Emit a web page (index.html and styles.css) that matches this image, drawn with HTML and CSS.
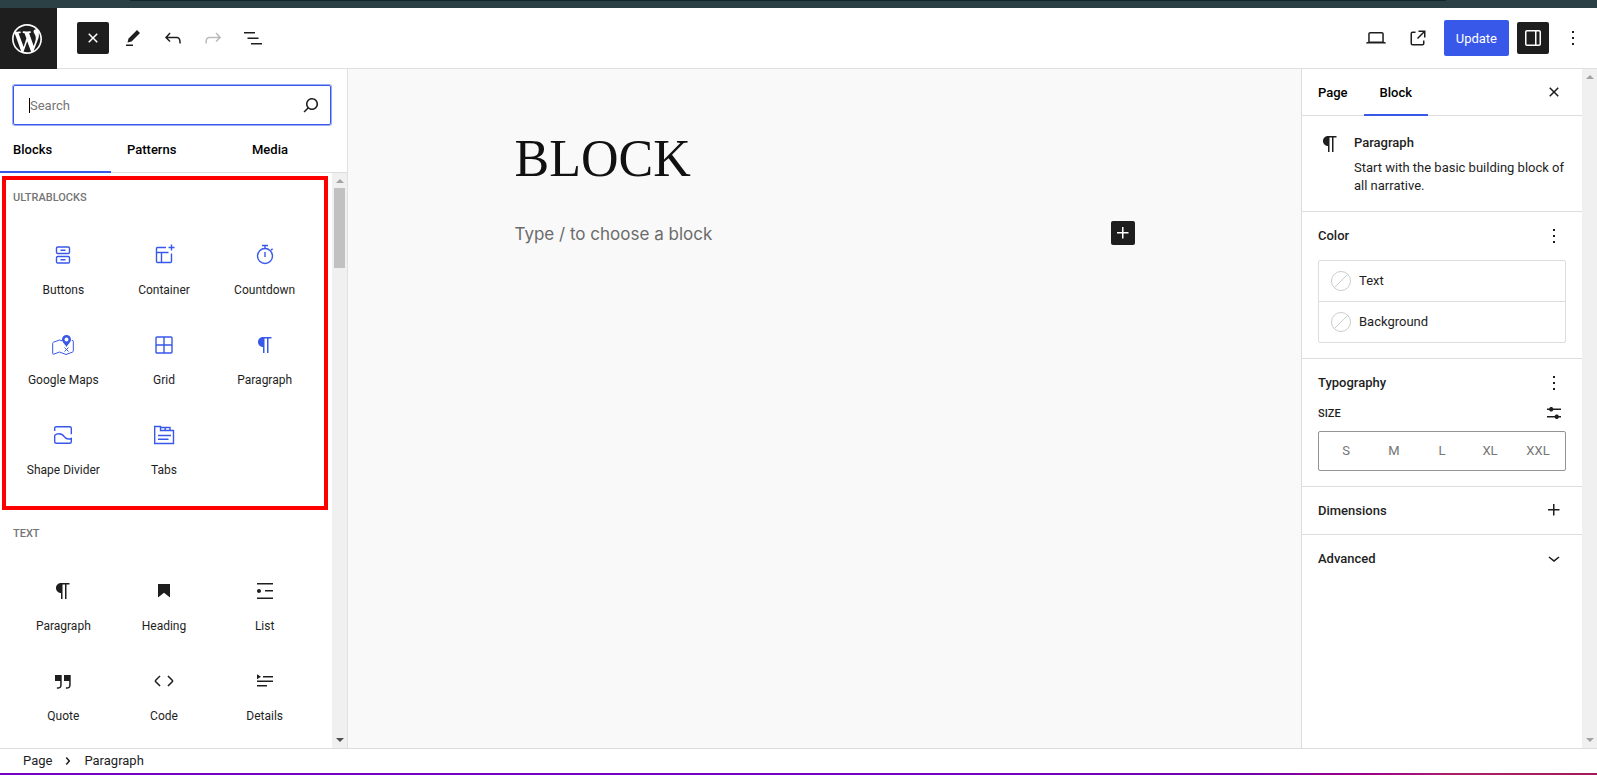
FILE: index.html
```html
<!DOCTYPE html>
<html lang="en">
<head>
<meta charset="utf-8">
<title>Edit Page</title>
<link rel="stylesheet" href="styles.css">
</head>
<body>
<svg class="sprite" aria-hidden="true">
  <symbol id="i-close" viewBox="0 0 24 24"><path d="M12 13.06l3.712 3.713 1.061-1.06L13.061 12l3.712-3.712-1.06-1.06L12 10.938 8.288 7.227l-1.061 1.06L10.939 12l-3.712 3.712 1.06 1.061L12 13.061z"/></symbol>
  <symbol id="i-more" viewBox="0 0 24 24"><path d="M13 19h-2v-2h2v2zm0-6h-2v-2h2v2zm0-6h-2V5h2v2z"/></symbol>
  <symbol id="i-plus" viewBox="0 0 24 24"><path d="M11 12.5V17.5H12.5V12.5H17.5V11H12.5V6H11V11H6V12.5H11Z"/></symbol>
  <symbol id="i-paragraph" viewBox="0 0 24 24"><path d="m9.996 14v-.2251l.004.0001v6.225h1.5v-14.5h2.5v14.5h1.5v-14.5h3v-1.5h-8.504c-2.761 0-5 2.239-5 5 0 2.761 2.239 5 5 5z"/></symbol>
</svg>

<div class="browser-strip"><span class="browser-strip-line"></span></div>

<header class="topbar">
  <a class="logo" href="#" aria-label="View Pages">
    <svg viewBox="-2 -2 24 24" width="36" height="36" fill="currentColor"><path d="M20 10c0-5.51-4.49-10-10-10C4.48 0 0 4.49 0 10c0 5.52 4.48 10 10 10 5.51 0 10-4.48 10-10zM7.78 15.37L4.37 6.22c.55-.02 1.17-.08 1.17-.08.5-.06.44-1.13-.06-1.11 0 0-1.45.11-2.37.11-.18 0-.37 0-.58-.01C4.12 2.69 6.87 1.11 10 1.11c2.33 0 4.45.87 6.05 2.34-.68-.11-1.65.39-1.65 1.58 0 .74.45 1.36.9 2.1.35.61.55 1.36.55 2.46 0 1.49-1.4 5-1.4 5l-3.03-8.37c.54-.02.82-.17.82-.17.5-.05.44-1.25-.06-1.22 0 0-1.44.12-2.38.12-.87 0-2.33-.12-2.33-.12-.5-.03-.56 1.2-.06 1.22l.92.08 1.26 3.41zM17.41 10c.24-.64.74-1.87.43-4.25.7 1.29 1.05 2.71 1.05 4.25 0 3.29-1.73 6.24-4.4 7.78.97-2.59 1.94-5.2 2.92-7.78zM6.1 18.09C3.12 16.65 1.11 13.53 1.11 10c0-1.3.23-2.48.72-3.59C3.25 10.3 4.67 14.2 6.1 18.09zm4.03-6.63l2.58 6.98c-.86.29-1.76.45-2.71.45-.79 0-1.57-.11-2.29-.33.81-2.38 1.62-4.74 2.42-7.1z"/></svg>
  </a>
  <div class="tools">
    <button class="icon-btn dark" aria-label="Close block inserter"><svg class="icon"><use href="#i-close"/></svg></button>
    <button class="icon-btn" aria-label="Tools"><svg class="icon" viewBox="0 0 24 24"><path d="m19 7-3-3-8.5 8.5-1 4 4-1L19 7Zm-7 11.500H5V20h7v-1.500Z"/></svg></button>
    <button class="icon-btn" aria-label="Undo"><svg class="icon" viewBox="0 0 24 24"><path d="M18.3 11.7c-.6-.6-1.4-.9-2.3-.9H6.7l2.900-3.300-1.100-1-4.500 5L8.500 16l1-1-2.700-2.700H16c.5 0 .9.2 1.300.5 1 1 1 3.400 1 4.500v.3h1.500v-.2c0-1.500 0-4.300-1.500-5.700z"/></svg></button>
    <button class="icon-btn" aria-label="Redo" disabled><svg class="icon" viewBox="0 0 24 24"><path d="M15.6 6.500l-1.100 1 2.900 3.300H8c-.9 0-1.700.3-2.300.9-1.400 1.500-1.400 4.200-1.400 5.600v.2h1.500v-.3c0-1.100 0-3.500 1-4.500.3-.3.7-.5 1.300-.5h9.200L14.500 15l1.100 1.100 4.600-4.600-4.600-5z"/></svg></button>
    <button class="icon-btn" aria-label="Document overview"><svg class="icon" viewBox="0 0 24 24"><path d="M3 6h11v1.500H3V6Zm3.500 5.500h11V13h-11v-1.500ZM21 17H10v1.500h11V17Z"/></svg></button>
  </div>
  <div class="actions">
    <button class="icon-btn wide" aria-label="View"><svg class="icon" viewBox="0 0 24 24"><path d="M20.500 16h-.7V8c0-1.100-.9-2-2-2H6.200c-1.100 0-2 .9-2 2v8h-.7c-.8 0-1.500.7-1.500 1.500h20c0-.8-.7-1.500-1.500-1.500zM5.700 8c0-.3.2-.5.5-.5h11.600c.3 0 .5.2.5.5v7.600H5.700V8z"/></svg></button>
    <button class="icon-btn wide" aria-label="View page"><svg class="icon" viewBox="0 0 24 24"><path d="M19.500 4.500h-7V6h4.440l-5.970 5.970 1.060 1.060L18 7.060v4.440h1.500v-7Zm-13 1a2 2 0 0 0-2 2v10a2 2 0 0 0 2 2h10a2 2 0 0 0 2-2v-3H17v3a.5.5 0 0 1-.5.5h-10a.5.5 0 0 1-.5-.5v-10a.5.5 0 0 1 .5-.5h3V5.500h-3Z"/></svg></button>
    <button class="update">Update</button>
    <button class="icon-btn dark" aria-label="Settings"><svg class="icon" viewBox="0 0 24 24"><path d="M18 4H6c-1.100 0-2 .9-2 2v12c0 1.100.9 2 2 2h12c1.100 0 2-.9 2-2V6c0-1.100-.9-2-2-2zm-4 14.500H6c-.3 0-.5-.2-.5-.5V6c0-.3.2-.5.5-.5h8v13zm4.500-.5c0 .3-.2.5-.5.5h-2.500v-13H18c.3 0 .5.2.5.5v12z"/></svg></button>
    <button class="icon-btn" aria-label="Options"><svg class="icon"><use href="#i-more"/></svg></button>
  </div>
</header>

<div class="workspace">
  <aside class="inserter">
    <div class="search">
      <span class="caret"></span>
      <input type="search" placeholder="Search" aria-label="Search for blocks and patterns">
      <svg class="icon" viewBox="0 0 24 24"><path d="M13 5c-3.300 0-6 2.700-6 6 0 1.400.5 2.700 1.300 3.700l-3.800 3.800 1.100 1.100 3.800-3.800c1 .8 2.300 1.300 3.700 1.300 3.300 0 6-2.700 6-6S16.300 5 13 5zm0 10.500c-2.500 0-4.500-2-4.500-4.500s2-4.500 4.500-4.500 4.500 2 4.500 4.500-2 4.500-4.500 4.500z"/></svg>
    </div>
    <nav class="inserter-tabs">
      <button class="tab active">Blocks</button>
      <button class="tab">Patterns</button>
      <button class="tab">Media</button>
    </nav>
    <div class="inserter-body">
      <div class="block-list">
        <section class="category custom">
          <h2>Ultrablocks</h2>
          <div class="block-grid">
            <button class="block"><svg class="icon line" viewBox="0 0 24 24"><rect x="5.500" y="4" width="13" height="6.500" rx="1.200"/><rect x="5.500" y="13.500" width="13" height="6.500" rx="1.200"/><path d="M9.500 7.300h5M9.500 16.700h5"/></svg><span>Buttons</span></button>
            <button class="block"><svg class="icon line" viewBox="0 0 24 24"><path d="M14 4.500H5.500a1 1 0 0 0-1 1v13a1 1 0 0 0 1 1h13a1 1 0 0 0 1-1v-8M4.500 9.500h12M9.500 9.500v10M19.500 1.500v6M16.500 4.500h6"/></svg><span>Container</span></button>
            <button class="block"><svg class="icon line" viewBox="0 0 24 24"><circle cx="12" cy="13" r="7.500"/><path d="M9 2.500h6M12 2.500v3M12 9v5M18 7.300l1.600-1.600"/></svg><span>Countdown</span></button>
            <button class="block"><svg class="icon line thin" viewBox="0 0 24 24"><path d="M11 7.800 8.500 7 2.500 9.200q-.8.300-.8 1.100v10.200q0 1 1 .7L8.500 19l6.500 2.500 6.300-2.300q1-.4 1-1.300V8.300q0-1.300-1.500-.8M13.500 14.500l4 4M17.500 14.500l-4 4"/><path class="solid" fill-rule="evenodd" d="M15.500 2a4.500 4.500 0 0 0-4.500 4.500c0 2.600 2.500 4 4.500 7.500 2-3.500 4.500-4.900 4.500-7.500A4.500 4.500 0 0 0 15.500 2zm0 2.600a2 2 0 1 1 0 4 2 2 0 0 1 0-4z"/></svg><span>Google Maps</span></button>
            <button class="block"><svg class="icon line" viewBox="0 0 24 24"><rect x="4" y="4" width="16" height="16" rx="1"/><path d="M12 4v16M4 12h16"/></svg><span>Grid</span></button>
            <button class="block"><svg class="icon"><use href="#i-paragraph"/></svg><span>Paragraph</span></button>
            <button class="block"><svg class="icon line" viewBox="0 0 24 24"><path d="M3.700 8V5.200a1.500 1.500 0 0 1 1.500-1.500h13.600a1.500 1.500 0 0 1 1.500 1.500v6M3.700 12.300v6.500a1.500 1.500 0 0 0 1.500 1.500h13.600a1.500 1.500 0 0 0 1.500-1.500V15.500c-3 1.200-5 .8-7-1.800C11.500 11.200 10 10.700 8 10.700c-2 0-3.300.6-4.300 1.600"/></svg><span>Shape Divider</span></button>
            <button class="block"><svg class="icon line" viewBox="0 0 24 24"><path d="M2.700 3.500h5.800v4h13v13H2.700zM8.500 4.500h9.500v3M13.200 4.500v3M6 12.500h13M6 16.200h10.500"/></svg><span>Tabs</span></button>
          </div>
        </section>
        <section class="category">
          <h2>Text</h2>
          <div class="block-grid">
            <button class="block"><svg class="icon"><use href="#i-paragraph"/></svg><span>Paragraph</span></button>
            <button class="block"><svg class="icon" viewBox="0 0 24 24"><path d="M6 5V18.590L12 13.850L18 18.590V5H6Z"/></svg><span>Heading</span></button>
            <button class="block"><svg class="icon" viewBox="0 0 24 24"><path d="M4 4v1.500h16V4H4zm8 8.500h8V11h-8v1.500zM4 20h16v-1.500H4V20zm4-8c0-1.100-.9-2-2-2s-2 .9-2 2 .9 2 2 2 2-.9 2-2z"/></svg><span>List</span></button>
            <button class="block"><svg class="icon" viewBox="0 0 24 24"><path d="M13 6v6h5.200v4c0 .8-.2 1.400-.5 1.700-.6.6-1.600.6-2.500.5h-.3v1.500h.5c1 0 2.300-.1 3.300-1 .6-.6 1-1.600 1-2.800V6H13zm-9 6h5.200v4c0 .8-.2 1.400-.5 1.700-.6.6-1.600.6-2.500.5h-.3v1.500h.5c1 0 2.300-.1 3.300-1 .6-.6 1-1.600 1-2.800V6H4v6z"/></svg><span>Quote</span></button>
            <button class="block"><svg class="icon" viewBox="0 0 24 24"><path d="M20.800 10.700l-4.300-4.300-1.100 1.100 4.300 4.300c.1.1.1.3 0 .4l-4.300 4.300 1.100 1.100 4.300-4.300c.7-.8.7-1.900 0-2.600zM4.200 11.800l4.300-4.300-1-1-4.300 4.300c-.7.7-.7 1.800 0 2.500l4.300 4.300 1.100-1.100-4.300-4.300c-.2-.1-.2-.3-.1-.4z"/></svg><span>Code</span></button>
            <button class="block"><svg class="icon" viewBox="0 0 24 24"><path d="M4 16h10v1.500H4V16Zm0-4.500h16V13H4v-1.500ZM10 7h10v1.500H10V7ZM4 5.250l4 2.500-4 2.500v-5Z"/></svg><span>Details</span></button>
          </div>
        </section>
        <div class="highlight"></div>
      </div>
      <div class="scrollbar"><i class="arrow up"></i><i class="thumb"></i><i class="arrow down strong"></i></div>
    </div>
  </aside>

  <main class="canvas">
    <div class="post">
      <h1>BLOCK</h1>
      <div class="prompt">
        <p>Type / to choose a block</p>
        <button class="add" aria-label="Add block"><svg class="icon"><use href="#i-plus"/></svg></button>
      </div>
    </div>
  </main>

  <aside class="settings">
    <div class="settings-body">
      <div class="settings-tabs">
        <button class="tab">Page</button>
        <button class="tab active">Block</button>
        <button class="mini" aria-label="Close Settings"><svg class="icon"><use href="#i-close"/></svg></button>
      </div>
      <div class="card">
        <svg class="icon"><use href="#i-paragraph"/></svg>
        <div>
          <h2>Paragraph</h2>
          <p>Start with the basic building block of all narrative.</p>
        </div>
      </div>
      <section class="panel">
        <div class="panel-head"><h2>Color</h2><button class="mini" aria-label="Color options"><svg class="icon"><use href="#i-more"/></svg></button></div>
        <div class="colors">
          <button class="color"><span class="swatch"></span>Text</button>
          <button class="color"><span class="swatch"></span>Background</button>
        </div>
      </section>
      <section class="panel">
        <div class="panel-head"><h2>Typography</h2><button class="mini" aria-label="Typography options"><svg class="icon"><use href="#i-more"/></svg></button></div>
        <div class="panel-head size-head"><h3>Size</h3><button class="mini" aria-label="Set custom size"><svg class="icon" viewBox="0 0 24 24"><path d="m19 7.500h-7.628c-.309-.874-1.142-1.500-2.122-1.500-.98 0-1.813.626-2.122 1.500h-2.128v1.500h2.128c.309.874 1.142 1.500 2.122 1.500.98 0 1.813-.626 2.122-1.500h7.628zM19 15h-2.128c-.309-.874-1.142-1.500-2.122-1.500s-1.813.626-2.122 1.500h-7.628v1.500h7.628c.309.874 1.142 1.500 2.122 1.500s1.813-.626 2.122-1.500h2.128z"/></svg></button></div>
        <div class="sizes">
          <button>S</button><button>M</button><button>L</button><button>XL</button><button>XXL</button>
        </div>
      </section>
      <section class="panel slim">
        <div class="panel-head"><h2>Dimensions</h2><button class="mini" aria-label="Dimensions options"><svg class="icon"><use href="#i-plus"/></svg></button></div>
      </section>
      <section class="panel slim">
        <div class="panel-head"><h2>Advanced</h2><button class="mini" aria-label="Toggle Advanced"><svg class="icon" viewBox="0 0 24 24"><path d="M17.500 11.600L12 16l-5.500-4.400.9-1.200L12 14l4.500-3.600 1 1.200z"/></svg></button></div>
      </section>
    </div>
    <div class="scrollbar"><i class="arrow up"></i><i class="arrow down"></i></div>
  </aside>
</div>

<footer class="breadcrumb">
  <button>Page</button>
  <svg class="icon" viewBox="0 0 24 24"><path d="M10.862 8.040L14.280 12.029L10.862 16.017L9.723 15.040L12.305 12.029L9.723 9.017L10.862 8.040Z"/></svg>
  <span>Paragraph</span>
</footer>
<div class="bottom-strip"></div>
</body>
</html>
```

FILE: styles.css
```css
* { box-sizing: border-box; }

body {
  margin: 0;
  height: 100vh;
  display: flex;
  flex-direction: column;
  overflow: hidden;
  background: #fff;
  color: #1e1e1e;
  font: 13px/18px Roboto, "Liberation Sans", sans-serif;
}

h1, h2, h3, p { margin: 0; }

button {
  margin: 0;
  padding: 0;
  border: 0;
  background: none;
  color: inherit;
  font: inherit;
}

.sprite { display: none; }

.icon {
  display: block;
  flex: none;
  width: 24px;
  height: 24px;
  fill: currentColor;
}

.icon.line {
  fill: none;
  stroke: currentColor;
  stroke-width: 1.4;
}

.icon.thin { stroke-width: 1; }
.icon .solid { fill: currentColor; stroke: none; }

/* Window edges */
.browser-strip {
  flex: none;
  height: 8px;
  padding: 0 151px 0 130px;
  background: #2a4045;
}

.browser-strip-line {
  display: block;
  height: 1px;
  background: #12262b;
}

.bottom-strip {
  flex: none;
  height: 2px;
  background: linear-gradient(90deg, #7a00c4 0%, #7a00c4 60%, #7400a8 78%, #980090 85%, #a8206c 91%, #a01c5c 100%);
}

/* Top bar */
.topbar {
  flex: none;
  display: flex;
  align-items: center;
  height: 61px;
  border-bottom: 1px solid #e0e0e0;
}

.logo {
  display: flex;
  align-items: center;
  width: 57px;
  height: 61px;
  margin-bottom: -1px;
  padding-left: 9px;
  background: #1e1e1e;
  color: #fff;
}

.tools, .actions {
  display: flex;
  align-items: center;
  gap: 8px;
}

.tools { padding-left: 20px; }
.actions { margin-left: auto; padding-right: 8px; }

.icon-btn {
  display: flex;
  align-items: center;
  justify-content: center;
  width: 32px;
  height: 32px;
  border-radius: 2px;
}

.icon-btn.wide { width: 34px; }
.icon-btn.dark { background: #1e1e1e; color: #fff; }
.icon-btn:disabled { color: #bbb; }

.update {
  height: 36px;
  margin-left: 1px;
  padding: 2px 12px 0;
  border-radius: 2px;
  background: #3858e9;
  color: #fff;
}

/* Main row */
.workspace {
  flex: 1;
  display: flex;
  min-height: 0;
}

.scrollbar {
  flex: none;
  display: flex;
  flex-direction: column;
  align-items: center;
  width: 15px;
  padding: 6px 0;
  background: #f0f0f0;
}

.arrow {
  border: 4px solid transparent;
  border-top-width: 0;
  border-bottom: 4px solid #a3a3a3;
}

.arrow.down {
  margin-top: auto;
  border-top: 4px solid #a3a3a3;
  border-bottom-width: 0;
}

.arrow.strong { border-top-color: #505050; }

.thumb {
  width: 11px;
  height: 80px;
  margin-top: 5px;
  background: #c1c1c1;
}

/* Block inserter */
.inserter {
  flex: none;
  display: flex;
  flex-direction: column;
  width: 348px;
  border-right: 1px solid #e0e0e0;
}

.search {
  flex: none;
  position: relative;
  display: flex;
  align-items: center;
  height: 40px;
  margin: 16px 16px 0 13px;
  padding: 0 7px 0 16px;
  border: 1px solid #3858e9;
  border-radius: 2px;
  box-shadow: 0 0 0 1px #9bacf4;
}

.search input {
  flex: 1;
  min-width: 0;
  padding: 2px 0 0;
  border: 0;
  outline: 0;
  background: none;
  color: inherit;
  font: inherit;
}

.search input::placeholder { color: #757575; }

.caret {
  position: absolute;
  left: 15px;
  width: 1px;
  height: 15px;
  background: #000;
}

.tab {
  position: relative;
  color: #000;
  font-weight: 500;
  text-align: left;
}

.tab.active::after {
  content: "";
  position: absolute;
  left: 0;
  right: 0;
  bottom: -1px;
  height: 2px;
  background: #3858e9;
}

.inserter-tabs {
  flex: none;
  display: grid;
  grid-template-columns: 111fr 125fr 111fr;
  height: 48px;
  border-bottom: 1px solid #ddd;
}

.inserter-tabs .tab { padding: 2px 16px 0; }
.inserter-tabs .tab:first-child { padding-left: 13px; }

.inserter-body {
  flex: 1;
  display: flex;
  min-height: 0;
}

.block-list {
  flex: 1;
  position: relative;
  overflow: hidden;
}

.category { padding: 17px 17px 12px 13px; }

.category h2 {
  margin-bottom: 21px;
  color: #757575;
  font-size: 11px;
  font-weight: 500;
  line-height: 16px;
  text-transform: uppercase;
}

.block-grid {
  display: grid;
  grid-template-columns: repeat(3, 1fr);
}

.block {
  display: flex;
  flex-direction: column;
  align-items: center;
  gap: 16px;
  padding: 16px 0 20px;
  font-size: 12px;
  line-height: 14px;
}

.custom .block .icon { color: #3858e9; }

.highlight {
  position: absolute;
  top: 3px;
  left: 2px;
  right: 4px;
  height: 334px;
  border: 4px solid #f00;
  pointer-events: none;
}

/* Canvas */
.canvas {
  flex: 1;
  background: #f9f9f9;
}

.post {
  max-width: 620px;
  margin: 0 auto;
  padding-top: 60px;
}

.post h1 {
  color: #111;
  font: 400 52px/60px "Liberation Serif", serif;
}

.prompt {
  display: flex;
  align-items: center;
  justify-content: space-between;
  margin-top: 29px;
  color: #6b6b6b;
  font: 17px/28px Inter, sans-serif;
}

.prompt p { padding-top: 2px; }

.add {
  width: 24px;
  height: 24px;
  border-radius: 2px;
  background: #1e1e1e;
  color: #fff;
}

/* Settings sidebar */
.settings {
  flex: none;
  display: flex;
  width: 296px;
  border-left: 1px solid #ddd;
}

.settings-body { flex: 1; }

.settings-tabs {
  display: flex;
  align-items: stretch;
  height: 47px;
  padding-right: 16px;
  border-bottom: 1px solid #ddd;
}

.settings-tabs .tab { padding: 2px 16px 0; }
.settings-tabs .mini { margin-left: auto; }

.card {
  display: flex;
  gap: 12px;
  padding: 16px;
}

.card h2 {
  margin-bottom: 5px;
  font-size: 13px;
  font-weight: 500;
  line-height: 22px;
}

.panel {
  padding: 12px 16px 15px;
  border-top: 1px solid #ddd;
}

.panel.slim { padding: 11px 16px 12px; }
.panel.slim h2 { padding-top: 2px; }

.panel-head {
  display: flex;
  align-items: center;
  justify-content: space-between;
  height: 24px;
}

.panel-head h2 { font-size: 13px; font-weight: 500; }

.size-head { margin: 6px 0; }

.size-head h3 {
  padding-top: 2px;
  font-size: 11px;
  font-weight: 500;
  text-transform: uppercase;
}

.colors {
  margin-top: 12px;
  border: 1px solid #ddd;
  border-radius: 2px;
}

.color {
  display: flex;
  align-items: center;
  gap: 8px;
  width: 100%;
  height: 40px;
  padding: 0 12px;
}

.color + .color {
  height: 41px;
  border-top: 1px solid #ddd;
}

.swatch {
  width: 20px;
  height: 20px;
  border: 1px solid #ccc;
  border-radius: 50%;
  background: linear-gradient(-45deg, transparent 48%, #ccc 48%, #ccc 52%, transparent 52%);
}

.sizes {
  display: grid;
  grid-template-columns: repeat(5, 1fr);
  height: 40px;
  padding: 0 3px;
  border: 1px solid #949494;
  border-radius: 2px;
  color: #757575;
}

/* Footer */
.breadcrumb {
  flex: none;
  display: flex;
  align-items: center;
  gap: 4px;
  height: 25px;
  padding-left: 23px;
  border-top: 1px solid #ddd;
}
```
